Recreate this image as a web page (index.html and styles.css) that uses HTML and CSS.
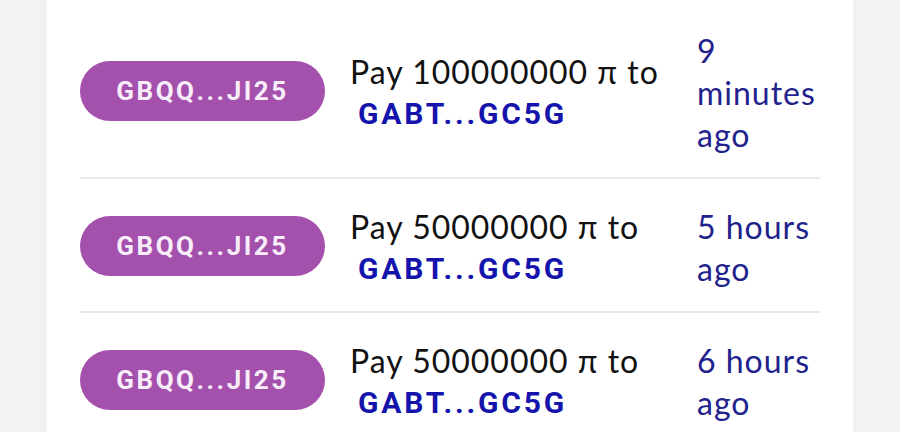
FILE: index.html
```html
<!DOCTYPE html>
<html lang="en">
<head>
  <meta charset="UTF-8">
  <meta name="viewport" content="width=device-width, initial-scale=1.0">
  <title>Payments</title>
  <link rel="stylesheet" href="styles.css">
</head>
<body>
  <div class="card">
    <ul class="ops">
      <li class="op">
        <span class="pill">GBQQ...JI25</span>
        <div class="desc">Pay 100000000 π to <span class="addr">GABT...GC5G</span></div>
        <div class="when">9 minutes ago</div>
      </li>
      <li class="op">
        <span class="pill">GBQQ...JI25</span>
        <div class="desc">Pay 50000000 π to <span class="addr">GABT...GC5G</span></div>
        <div class="when">5 hours ago</div>
      </li>
      <li class="op">
        <span class="pill">GBQQ...JI25</span>
        <div class="desc">Pay 50000000 π to <span class="addr">GABT...GC5G</span></div>
        <div class="when">6 hours ago</div>
      </li>
    </ul>
  </div>
</body>
</html>
```

FILE: styles.css
```css
body {
  margin: 0;
  background-color: #f2f2f2;
  font-family: Lato, "Open Sans", sans-serif;
  overflow: hidden;
}

.card {
  width: 806px;
  margin: 0 auto;
  min-height: 432px;
  background-color: #ffffff;
}

.ops {
  list-style: none;
  margin: 0;
  padding: 3px 33px 0 33px;
}

/* one payment row */
.op {
  display: flex;
  align-items: center;
  padding: 25px 0 23px 0;
  border-bottom: 2px solid #e9e9e9;
}

.pill {
  flex-shrink: 0;
  width: 245px;
  height: 60px;
  line-height: 60px;
  border-radius: 30px;
  margin-right: 25px;
  background-color: #a450ad;
  color: #f8eefa;
  text-align: center;
  font-family: Roboto, sans-serif;
  font-weight: 700;
  font-size: 26px;
  letter-spacing: 2.5px;
}

/* text sits a little low in the original font */
.desc,
.when {
  padding-top: 2px;
  margin-bottom: -2px;
  font-size: 32px;
  line-height: 42px;
  letter-spacing: 1px;
}

.desc {
  flex: 1;
  color: #111111;
}

.addr {
  display: block;
  padding-left: 8px;
  color: #1414ad;
  font-family: Roboto, sans-serif;
  font-weight: 700;
  font-size: 30px;
  letter-spacing: 2.8px;
}

.when {
  flex-shrink: 0;
  width: 123px;
  margin-left: 25px;
  color: #22228c;
}
```
